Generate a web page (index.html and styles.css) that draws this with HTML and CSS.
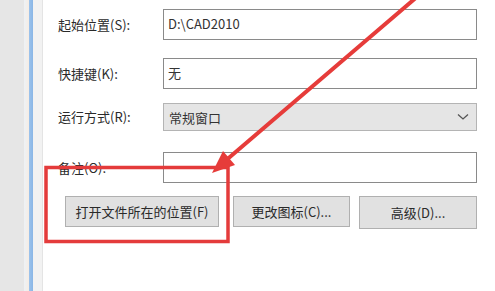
FILE: index.html
```html
<!DOCTYPE html>
<html lang="zh-CN">

<head>
    <meta charset="UTF-8">
    <meta name="viewport" content="width=device-width, initial-scale=1.0">
    <title>快捷方式属性</title>
    <link rel="stylesheet" href="styles.css">
</head>

<body>
    <div class="frame-edge"></div>
    <div class="frame-line"></div>
    <div class="frame-inner"></div>

    <main class="panel">
        <div class="field field-start">
            <label class="field-label">起始位置(S):</label>
            <div class="text-box">D:\CAD2010</div>
        </div>
        <div class="field field-hotkey">
            <label class="field-label">快捷键(K):</label>
            <div class="text-box">无</div>
        </div>
        <div class="field field-run">
            <label class="field-label">运行方式(R):</label>
            <div class="select-box">
                <span>常规窗口</span>
                <svg class="chevron" width="12" height="8" viewBox="0 0 12 8">
                    <path d="M1 1.5 L6 6 L11 1.5" fill="none" stroke="#555" stroke-width="1.3" />
                </svg>
            </div>
        </div>
        <div class="field field-note">
            <label class="field-label">备注(O):</label>
            <div class="text-box"></div>
        </div>

        <div class="button-row">
            <button class="btn btn-open">打开文件所在的位置(F)</button>
            <button class="btn btn-icon">更改图标(C)...</button>
            <button class="btn btn-adv">高级(D)...</button>
        </div>
    </main>

    <!-- red annotation drawn over the dialog -->
    <svg class="annotation" width="495" height="291" viewBox="0 0 495 291">
        <rect x="46" y="167.5" width="182" height="74" fill="none" stroke="#e43b3b" stroke-width="3.5" />
        <line x1="418" y1="-4" x2="224" y2="162" stroke="#e63c3a" stroke-width="4" stroke-linecap="round" />
        <polygon points="212,173 235,165 223,151" fill="#e63c3a" />
    </svg>
</body>

</html>
```

FILE: styles.css
```css
body {
    margin: 0;
    width: 495px;
    height: 291px;
    overflow: hidden;
    display: flex;
    background-color: #ffffff;
    font-family: "Noto Sans CJK SC", "Noto Sans", sans-serif;
    font-size: 13px;
    color: #2a2a2a;
    position: relative;
}

.frame-edge {
    width: 24px;
    background-color: #e6e6e6;
}

.frame-line {
    width: 9px;
    background: linear-gradient(to right, #eef2f6 0, #f5ece4 5px, #9cc3ec 5px, #8ab6e6 9px);
}

.frame-inner {
    width: 9px;
    background-color: #f2f2f2;
    border-right: 1px solid #e4e4e4;
}

.panel {
    flex: 1;
    padding: 9px 0 0 15px;
}

.field {
    display: grid;
    grid-template-columns: 105px 314px;
    align-items: center;
}

.field-label {
    line-height: 16px;
}

.field-start {
    margin-bottom: 18px;
}

.field-hotkey {
    margin-bottom: 14px;
}

.field-run {
    margin-bottom: 21px;
}

.field-note {
    margin-bottom: 13px;
}

.text-box {
    height: 31px;
    border: 1px solid #8a8a8a;
    background-color: #ffffff;
    padding: 5px 0 0 4px;
    box-sizing: border-box;
    color: #333333;
    line-height: 18px;
}

.select-box {
    height: 28px;
    border: 1px solid #b4b4b4;
    background-color: #e5e5e5;
    box-sizing: border-box;
    display: flex;
    align-items: center;
    justify-content: space-between;
    padding: 0 7px 0 5px;
    color: #333333;
}

.button-row {
    display: flex;
    align-items: flex-start;
    padding-left: 7px;
}

.btn {
    font-family: inherit;
    font-size: 13px;
    color: #2a2a2a;
    background-color: #e1e1e1;
    border: 1px solid #b0b0b0;
    height: 31px;
    padding: 0;
}

.btn-open {
    width: 154px;
    margin-right: 14px;
}

.btn-icon {
    width: 117px;
    margin-right: 9px;
}

.btn-adv {
    width: 118px;
    height: 33px;
}

.annotation {
    position: absolute;
    left: 0;
    top: 0;
    pointer-events: none;
}
```
